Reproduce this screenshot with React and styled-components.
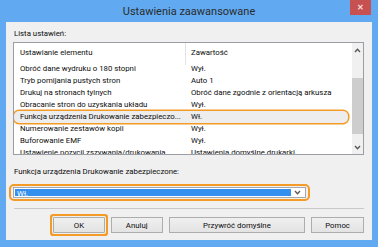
import React from "react";
import styled, { createGlobalStyle } from "styled-components";

const Global = createGlobalStyle`
  html, body { margin: 0; padding: 0; }
  body { font-family: Roboto, "Liberation Sans", Arial, sans-serif; }
`;

const Window = styled.div`
  width: 378px;
  height: 247px;
  box-sizing: border-box;
  background: #61aaf1;
  padding: 0 6px 7px 6px;
  display: flex;
  flex-direction: column;
`;

const TitleBar = styled.div`
  height: 22px;
  display: grid;
  grid-template-columns: 1fr auto 1fr;
  align-items: start;
`;

const Title = styled.div`
  grid-column: 2;
  font-size: 11px;
  line-height: 14px;
  padding-top: 5px;
  color: #2b2b2b;
`;

const CloseButton = styled.div`
  grid-column: 3;
  justify-self: end;
  margin-right: 1px;
  width: 21px;
  height: 15px;
  background: #c75050;
  color: #f4dcdc;
  font-size: 8px;
  font-weight: bold;
  display: flex;
  align-items: center;
  justify-content: center;
`;

const Content = styled.div`
  flex: 1;
  background: #f0f0f0;
  padding: 0 8px 0 7px;
  display: flex;
  flex-direction: column;
  font-size: 7.8px;
  color: #0c0c0c;
`;

const Label = styled.div`
  padding-left: 1px;
  line-height: 11px;
  margin-top: ${(p) => p.$top}px;
`;

const ListBox = styled.div`
  margin-top: 3px;
  height: 113px;
  box-sizing: border-box;
  border: 1px solid #9a9da3;
  background: #fff;
  display: flex;
  overflow: hidden;
`;

const ListBody = styled.div`
  flex: 1;
  display: flex;
  flex-direction: column;
  overflow: hidden;
`;

const HeaderRow = styled.div`
  height: 20px;
  flex: none;
  display: grid;
  grid-template-columns: 171px 1fr;
  align-items: center;
`;

const HeaderCell = styled.div`
  padding-left: ${(p) => (p.$second ? 5 : 6)}px;
  border-left: ${(p) => (p.$second ? "1px solid #e3e3e3" : "none")};
  line-height: 20px;
  padding-bottom: 2px;
`;

const Row = styled.div`
  height: 12px;
  flex: none;
  display: grid;
  grid-template-columns: 171px 1fr;
  align-items: center;
  line-height: 12px;
  box-sizing: border-box;
  ${(p) =>
    p.$selected &&
    `
    background: #ededed;
    box-shadow: 0 0 0 1.5px #f49a26;
    border-radius: 5px;
    margin: 0 4px 0 0;
  `}
`;

const Cell = styled.div`
  padding-left: 6px;
  white-space: nowrap;
  overflow: hidden;
`;

const ScrollBar = styled.div`
  width: 11px;
  flex: none;
  background: #f0f0f0;
  display: flex;
  flex-direction: column;
  align-items: center;
`;

const ScrollArrow = styled.div`
  height: ${(p) => p.$h}px;
  display: flex;
  align-items: center;
  justify-content: center;
  flex: none;
`;

const ScrollTrack = styled.div`
  flex: 1;
  width: 100%;
  display: flex;
  flex-direction: column;
`;

const Thumb = styled.div`
  margin-top: ${(p) => p.$top}px;
  height: ${(p) => p.$h}px;
  width: 100%;
  background: #cdcdcd;
`;

const ComboOutline = styled.div`
  margin-top: 7px;
  margin-left: -4px;
  width: 301px;
  height: 17px;
  box-sizing: border-box;
  border: 2px solid #f49a26;
  border-radius: 5px;
  padding: 1px 2px;
  display: flex;
`;

const Combo = styled.div`
  flex: 1;
  border: 1px solid #a8a8a8;
  background: #fff;
  display: flex;
  padding: 1px;
`;

const ComboValue = styled.div`
  flex: 1;
  background: #3390ee;
  color: #fff;
  line-height: 9px;
  padding-left: 2px;
`;

const ComboArrow = styled.div`
  width: 13px;
  display: flex;
  align-items: center;
  justify-content: center;
`;

const Separator = styled.div`
  margin-top: 7px;
  height: 1px;
  background: #c9c9c9;
  margin-left: 1px;
`;

const ButtonRow = styled.div`
  margin-top: 8px;
  display: flex;
  padding-left: 40px;
  gap: 6px;
`;

const Button = styled.div`
  width: ${(p) => p.$w}px;
  height: 16px;
  box-sizing: border-box;
  border: 1px solid #adadad;
  background: linear-gradient(#f0f0f0, #e3e3e3);
  display: flex;
  align-items: center;
  justify-content: center;
  ${(p) =>
    p.$focused &&
    `
    box-shadow: 0 0 0 1px #f0f0f0, 0 0 0 3px #f49a26;
    border-radius: 1px;
  `}
`;

const Chevron = ({ up }) => (
  <svg width="7" height="5" viewBox="0 0 7 5">
    <path
      d={up ? "M1 4 L3.5 1.3 L6 4" : "M1 1 L3.5 3.7 L6 1"}
      fill="none"
      stroke="#555"
      strokeWidth="1.3"
    />
  </svg>
);

const rows = [
  ["Obróć dane wydruku o 180 stopni", "Wył."],
  ["Tryb pomijania pustych stron", "Auto 1"],
  ["Drukuj na stronach tylnych", "Obróć dane zgodnie z orientacją arkusza"],
  ["Obracanie stron do uzyskania układu", "Wył."],
  ["Funkcja urządzenia Drukowanie zabezpieczo...", "Wł.", true],
  ["Numerowanie zestawów kopii", "Wył."],
  ["Buforowanie EMF", "Wył."],
  ["Ustawienie pozycji zszywania/drukowania", "Ustawienia domyślne drukarki"],
];

export default function App() {
  return (
    <>
      <Global />
      <Window>
        <TitleBar>
          <Title>Ustawienia zaawansowane</Title>
          <CloseButton>✕</CloseButton>
        </TitleBar>
        <Content>
          <Label $top={6}>Lista ustawień:</Label>
          <ListBox>
            <ListBody>
              <HeaderRow>
                <HeaderCell>Ustawianie elementu</HeaderCell>
                <HeaderCell $second>Zawartość</HeaderCell>
              </HeaderRow>
              {rows.map(([a, b, sel]) => (
                <Row key={a} $selected={sel}>
                  <Cell>{a}</Cell>
                  <Cell>{b}</Cell>
                </Row>
              ))}
            </ListBody>
            <ScrollBar>
              <ScrollArrow $h={14}>
                <Chevron up />
              </ScrollArrow>
              <ScrollTrack>
                <Thumb $top={21} $h={56} />
              </ScrollTrack>
              <ScrollArrow $h={14}>
                <Chevron />
              </ScrollArrow>
            </ScrollBar>
          </ListBox>
          <Label $top={11}>Funkcja urządzenia Drukowanie zabezpieczone:</Label>
          <ComboOutline>
            <Combo>
              <ComboValue>Wł.</ComboValue>
              <ComboArrow>
                <Chevron />
              </ComboArrow>
            </Combo>
          </ComboOutline>
          <Separator />
          <ButtonRow>
            <Button $w={52} $focused>OK</Button>
            <Button $w={52}>Anuluj</Button>
            <Button $w={137}>Przywróć domyślne</Button>
            <Button $w={53}>Pomoc</Button>
          </ButtonRow>
        </Content>
      </Window>
    </>
  );
}
